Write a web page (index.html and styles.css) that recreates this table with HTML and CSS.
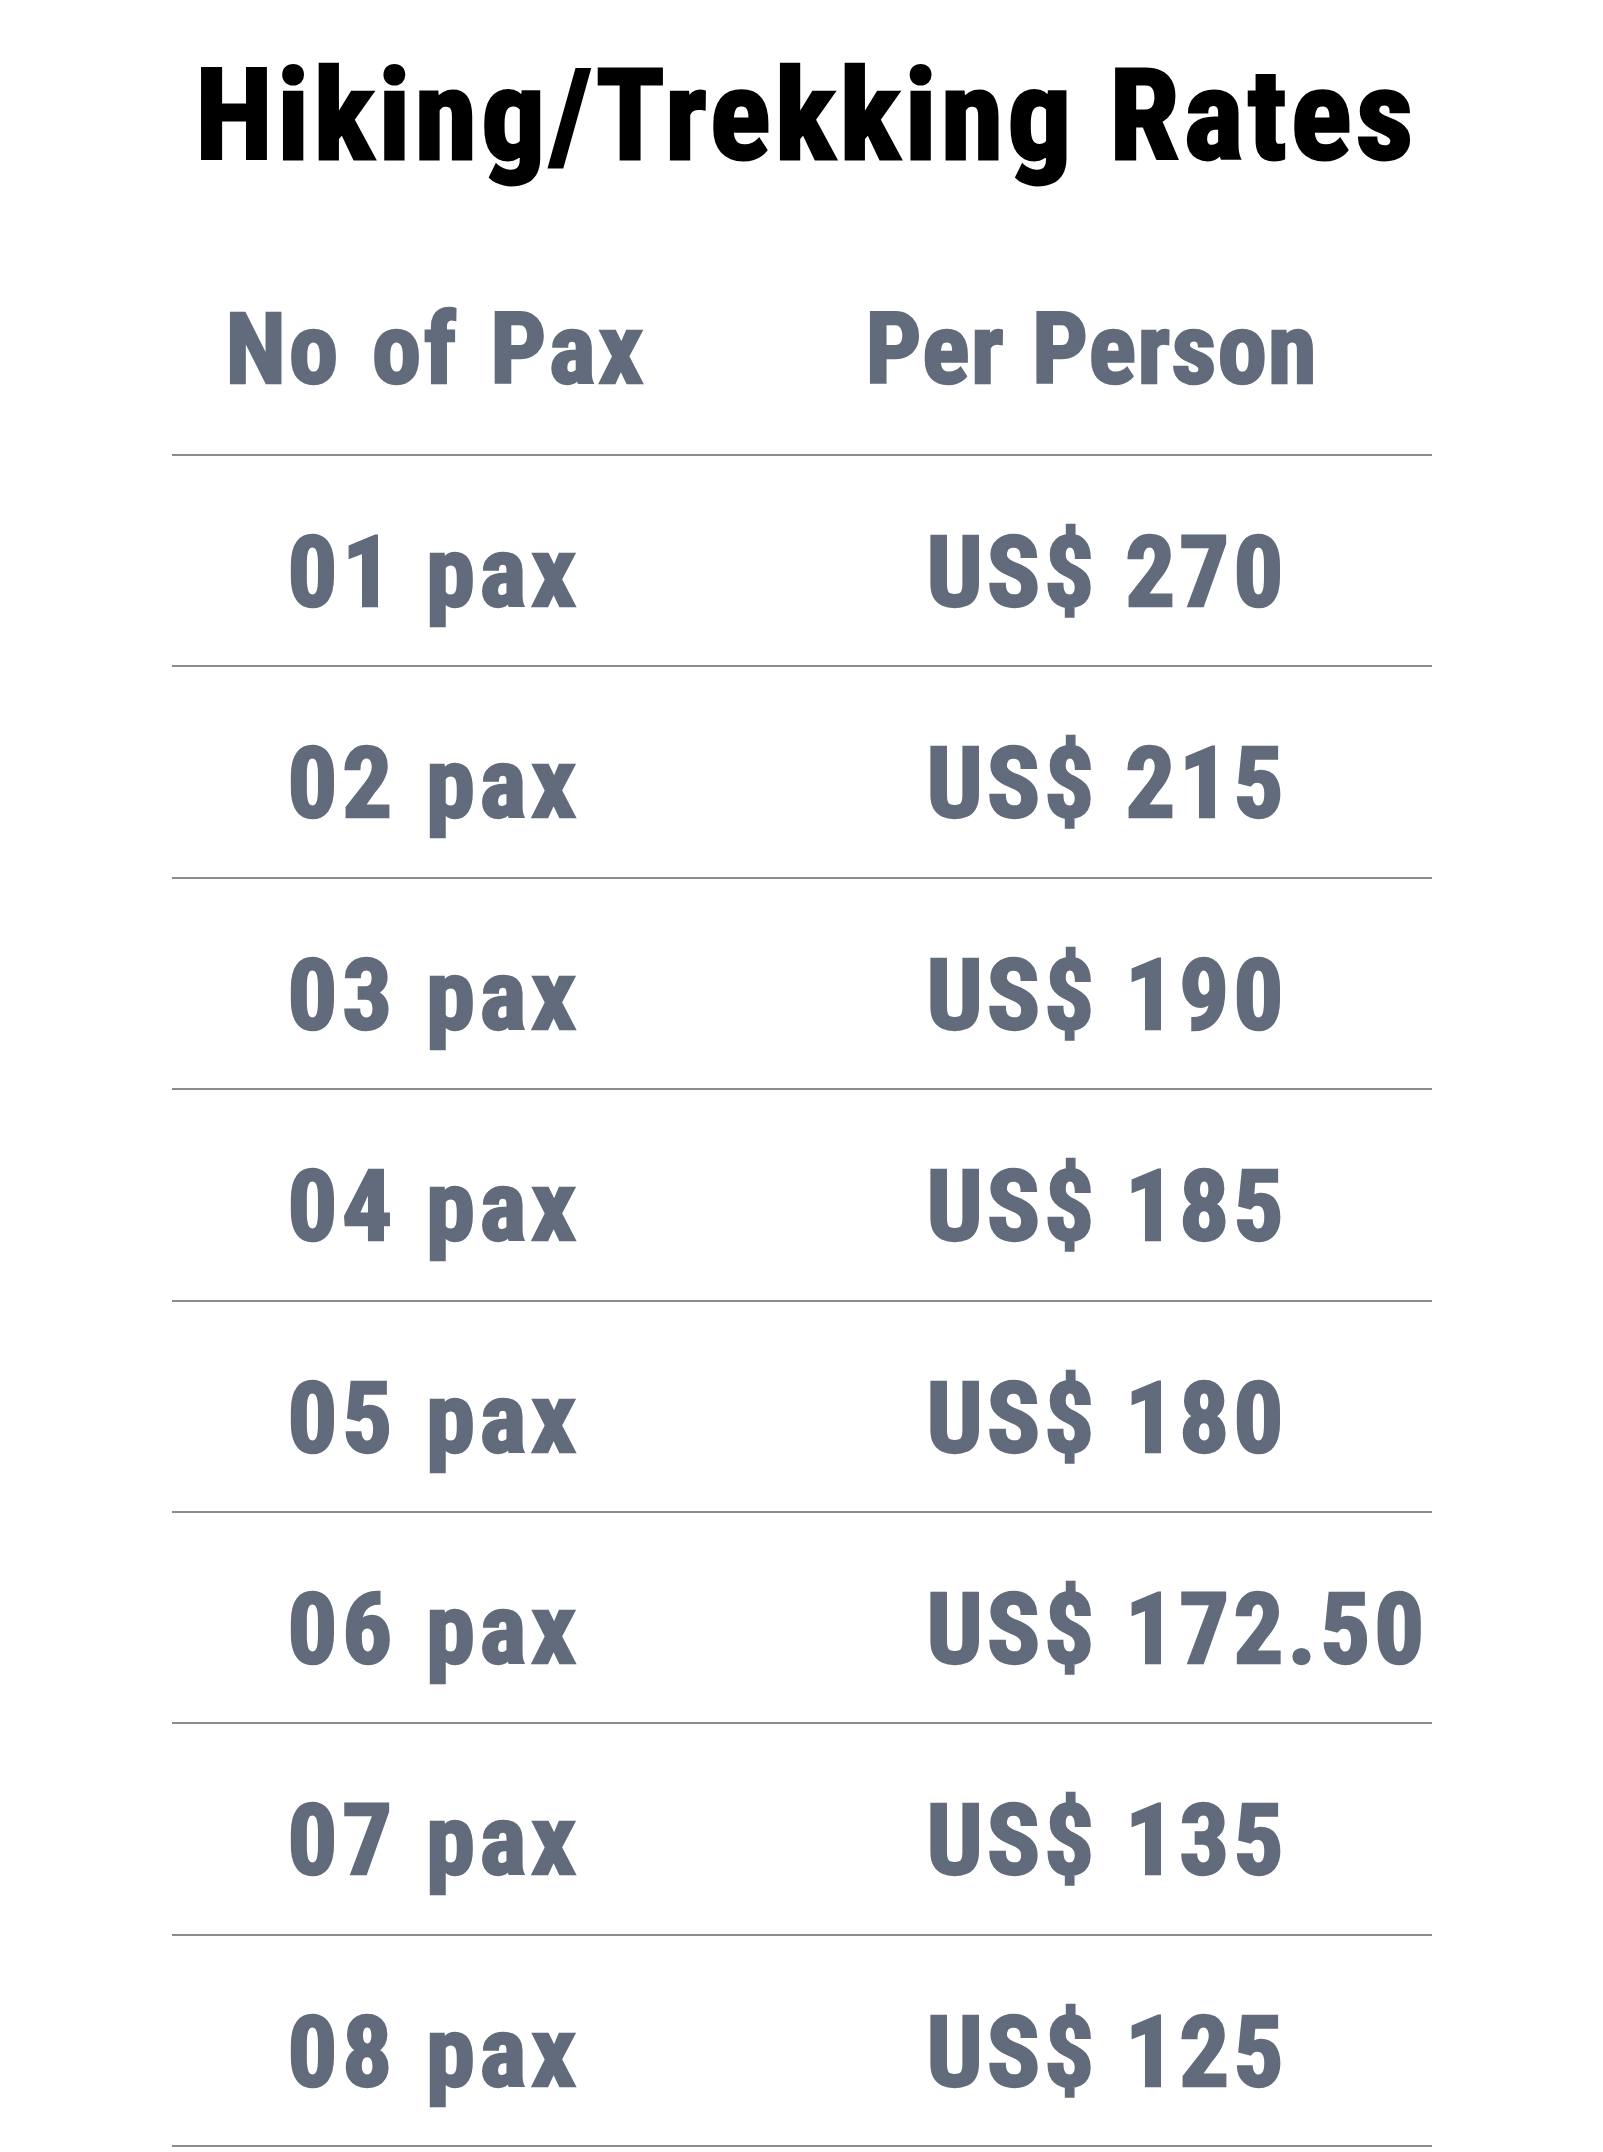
FILE: index.html
```html
<!DOCTYPE html>
<html lang="en">
<head>
<meta charset="utf-8">
<title>Hiking/Trekking Rates</title>
<link rel="stylesheet" href="styles.css">
</head>
<body>
<main class="page">
  <h1 class="title">Hiking/Trekking Rates</h1>
  <div class="rates">
    <div class="row row-head">
      <div class="cell th-pax">No of Pax</div>
      <div class="cell th-price">Per Person</div>
    </div>
    <div class="row">
      <div class="cell pax">01 pax</div>
      <div class="cell price">US$ 270</div>
    </div>
    <div class="row">
      <div class="cell pax">02 pax</div>
      <div class="cell price">US$ 215</div>
    </div>
    <div class="row">
      <div class="cell pax">03 pax</div>
      <div class="cell price">US$ 190</div>
    </div>
    <div class="row">
      <div class="cell pax">04 pax</div>
      <div class="cell price">US$ 185</div>
    </div>
    <div class="row">
      <div class="cell pax">05 pax</div>
      <div class="cell price">US$ 180</div>
    </div>
    <div class="row">
      <div class="cell pax">06 pax</div>
      <div class="cell price">US$ 172.50</div>
    </div>
    <div class="row">
      <div class="cell pax">07 pax</div>
      <div class="cell price">US$ 135</div>
    </div>
    <div class="row">
      <div class="cell pax">08 pax</div>
      <div class="cell price">US$ 125</div>
    </div>
  </div>
</main>
</body>
</html>
```
FILE: styles.css
```css
html, body {
  margin: 0;
  padding: 0;
  background: #ffffff;
}

.page {
  font-family: "Roboto Condensed", "DejaVu Sans Condensed", sans-serif;
  font-weight: 700;
}

.title {
  margin: 53px 0 0;
  padding-left: 10px;
  text-align: center;
  color: #000000;
  font-size: 126.4px;
  line-height: 126.4px;
  font-weight: 700;
  letter-spacing: 4.45px;
  -webkit-text-stroke: 3px #000000;
}

.rates {
  width: 1260px;
  margin: 121.6px auto 0;
}

.row {
  display: grid;
  grid-template-columns: 630px 630px;
  border-bottom: 2px solid #8f8b8d;
  padding: 68px 0 42.8px;
  font-size: 98.6px;
  line-height: 98.6px;
  color: #616b7b;
  -webkit-text-stroke: 2.5px #616b7b;
}

.row-head {
  padding: 0 0 54.4px;
}

.cell {
  white-space: nowrap;
}

.th-pax {
  padding-left: 54px;
  letter-spacing: 3.1px;
  word-spacing: 5px;
}

.th-price {
  padding-left: 64px;
  letter-spacing: 1.4px;
  word-spacing: 3px;
}

.pax {
  padding-left: 116px;
  letter-spacing: 5px;
  word-spacing: 1px;
}

.price {
  padding-left: 125px;
  letter-spacing: 4.2px;
}
```
